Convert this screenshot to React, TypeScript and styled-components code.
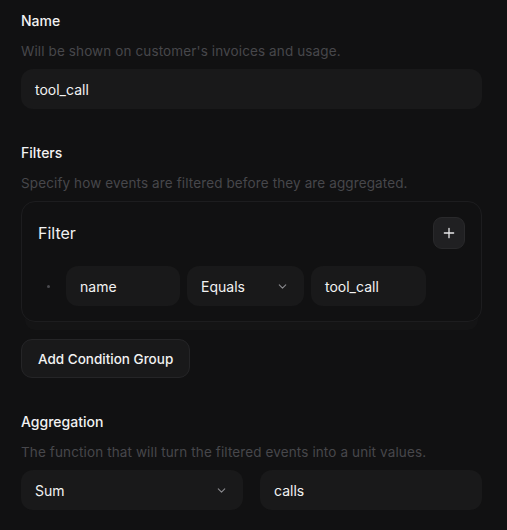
import { createGlobalStyle } from "styled-components";
import styled from "styled-components";

const GlobalStyle = createGlobalStyle`
  html, body {
    margin: 0;
    padding: 0;
    background: #111112;
  }
  body {
    font-family: Inter, "Noto Sans", sans-serif;
    color: #f2f2f2;
    -webkit-font-smoothing: antialiased;
  }
`;

const Page = styled.div`
  display: flex;
  flex-direction: column;
  gap: 34px;
  padding: 11px 25px 20px 21px;
  width: 461px;
`;

const Section = styled.section`
  display: flex;
  flex-direction: column;
`;

const Label = styled.div`
  font-size: 14px;
  line-height: 20px;
  font-weight: 500;
  color: #f2f2f2;
`;

const Hint = styled.div`
  margin-top: 10px;
  margin-bottom: 8px;
  font-size: 13.5px;
  line-height: 20px;
  letter-spacing: 0.12px;
  color: #47474b;
`;

const Field = styled.div<{ $width?: number }>`
  display: flex;
  align-items: center;
  justify-content: space-between;
  box-sizing: border-box;
  height: 40px;
  padding: 0 15px 0 14px;
  width: ${(p) => (p.$width ? `${p.$width}px` : "100%")};
  background: #19191a;
  border-radius: 12px;
  font-size: 14px;
  color: #f2f2f2;
  flex-shrink: 0;
`;

const Chevron = () => (
  <svg width="13" height="13" viewBox="0 0 24 24" fill="none" stroke="#8a8a8e" strokeWidth="2" strokeLinecap="round" strokeLinejoin="round">
    <path d="m6 9 6 6 6-6" />
  </svg>
);

const Card = styled.div`
  box-sizing: border-box;
  border: 1px solid #1d1d1f;
  border-radius: 14px;
  padding: 15px 16px 15px 16px;
  display: flex;
  flex-direction: column;
  gap: 17px;
  box-shadow: 0 12px 0 -4px #141415;
`;

const CardHeader = styled.div`
  display: flex;
  align-items: center;
  justify-content: space-between;
  height: 32px;
`;

const CardTitle = styled.div`
  font-size: 16px;
  font-weight: 400;
  color: #f2f2f2;
`;

const IconButton = styled.button`
  width: 32px;
  height: 32px;
  border-radius: 9px;
  border: 1px solid #29292b;
  background: #202022;
  display: flex;
  align-items: center;
  justify-content: center;
  padding: 0;
`;

const ConditionRow = styled.div`
  display: flex;
  align-items: center;
  gap: 7px;
`;

const Bullet = styled.span`
  width: 20px;
  display: flex;
  justify-content: center;
  margin-right: 1px;

  &::before {
    content: "";
    width: 3px;
    height: 3px;
    border-radius: 50%;
    background: #4a4a4e;
  }
`;

const Button = styled.button`
  align-self: flex-start;
  margin-top: 17px;
  height: 39px;
  padding: 0 16px;
  border-radius: 11px;
  border: 1px solid #252527;
  background: #19191a;
  color: #f2f2f2;
  font-family: inherit;
  font-size: 13.5px;
  font-weight: 500;
`;

const Pair = styled.div`
  display: grid;
  grid-template-columns: 1fr 1fr;
  gap: 17px;
`;

export default function App() {
  return (
    <>
      <GlobalStyle />
      <Page>
        <Section>
          <Label>Name</Label>
          <Hint>Will be shown on customer's invoices and usage.</Hint>
          <Field>tool_call</Field>
        </Section>

        <Section>
          <Label>Filters</Label>
          <Hint>Specify how events are filtered before they are aggregated.</Hint>
          <Card>
            <CardHeader>
              <CardTitle>Filter</CardTitle>
              <IconButton aria-label="Add filter">
                <svg width="14" height="14" viewBox="0 0 24 24" fill="none" stroke="#e8e8ea" strokeWidth="2.2" strokeLinecap="round">
                  <path d="M12 4v16M4 12h16" />
                </svg>
              </IconButton>
            </CardHeader>
            <ConditionRow>
              <Bullet />
              <Field $width={114}>name</Field>
              <Field $width={117}>
                Equals
                <Chevron />
              </Field>
              <Field $width={115}>tool_call</Field>
            </ConditionRow>
          </Card>
          <Button>Add Condition Group</Button>
        </Section>

        <Section>
          <Label>Aggregation</Label>
          <Hint>The function that will turn the filtered events into a unit values.</Hint>
          <Pair>
            <Field>
              Sum
              <Chevron />
            </Field>
            <Field>calls</Field>
          </Pair>
        </Section>
      </Page>
    </>
  );
}
